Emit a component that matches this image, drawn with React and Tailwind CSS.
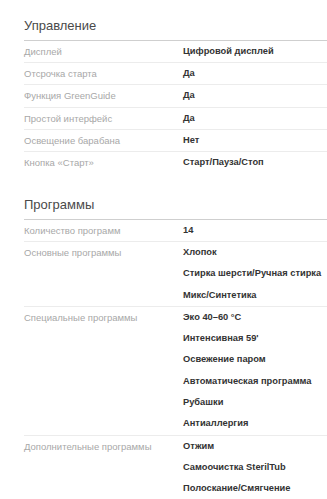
export default function App() {
  const s1 = [
    ["Дисплей", ["Цифровой дисплей"]],
    ["Отсрочка старта", ["Да"]],
    ["Функция GreenGuide", ["Да"]],
    ["Простой интерфейс", ["Да"]],
    ["Освещение барабана", ["Нет"]],
    ["Кнопка «Старт»", ["Старт/Пауза/Стоп"]],
  ];
  const s2 = [
    ["Количество программ", ["14"]],
    ["Основные программы", ["Хлопок", "Стирка шерсти/Ручная стирка", "Микс/Синтетика"]],
    [
      "Специальные программы",
      ["Эко 40–60 °C", "Интенсивная 59'", "Освежение паром", "Автоматическая программа", "Рубашки", "Антиаллергия"],
    ],
    ["Дополнительные программы", ["Отжим", "Самоочистка SterilTub", "Полоскание/Смягчение"]],
  ];
  return (
    <div className="w-[327px] h-[499px] overflow-hidden bg-white pl-[24px] font-['Liberation_Sans',Arial,sans-serif]">
      <div className="pt-[18px]">
        <div className="text-[13px] leading-[16px] text-[#4a4a4a] pb-[6px] border-b border-[#cfcfcf]">Управление</div>
        {s1.map(([l, v], i) => (
          <div
            key={l}
            className={`flex h-[22.2px] ${i < s1.length - 1 ? "border-b border-[#ececec]" : ""}`}
          >
            <div className="w-[159px] shrink-0 text-[9.5px] leading-[21.2px] text-[#a8a8a8]">{l}</div>
            <div className="text-[9.3px] leading-[21.2px] font-bold text-[#333]">{v[0]}</div>
          </div>
        ))}
      </div>
      <div className="mt-[22.5px]">
        <div className="text-[13px] leading-[16px] text-[#4a4a4a] pb-[6px] border-b border-[#cfcfcf]">Программы</div>
        {s2.map(([l, v]) => (
          <div key={l} className="flex border-b border-[#ececec]">
            <div className="w-[159px] shrink-0 text-[9.5px] leading-[21.3px] text-[#a8a8a8]">{l}</div>
            <div className="flex flex-col">
              {v.map((x) => (
                <div key={x} className="h-[21.3px] text-[9.3px] leading-[21.3px] font-bold text-[#333] whitespace-nowrap">
                  {x}
                </div>
              ))}
            </div>
          </div>
        ))}
      </div>
    </div>
  );
}
